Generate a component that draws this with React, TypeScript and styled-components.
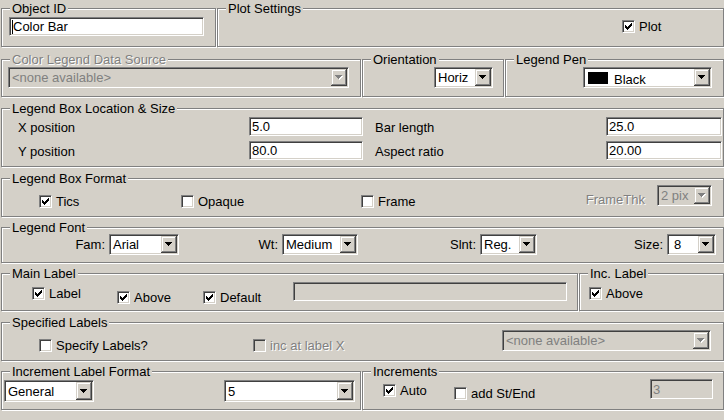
import styled, { createGlobalStyle, css } from "styled-components";

const FACE = "#d4d0c8";
const SHADOW = "#808080";
const DARK = "#404040";

const GlobalStyle = createGlobalStyle`
  html, body {
    margin: 0;
    padding: 0;
    background: ${FACE};
  }
  body {
    font-family: "Liberation Sans", Arial, sans-serif;
    font-size: 13px;
    color: #000;
  }
`;

interface Place {
  $ml?: number | string;
  $mr?: number;
  $mt?: number;
  $w?: number;
}

const place = css<Place>`
  flex: none;
  margin-left: ${(p) => (typeof p.$ml === "string" ? p.$ml : `${p.$ml ?? 0}px`)};
  margin-right: ${(p) => p.$mr ?? 0}px;
  margin-top: ${(p) => p.$mt ?? 0}px;
  ${(p) => (p.$w ? `width: ${p.$w}px;` : "")}
`;

const muted = css<{ $off?: boolean }>`
  color: ${(p) => (p.$off ? SHADOW : "#000")};
  text-shadow: ${(p) => (p.$off ? "1px 1px 0 #fff" : "none")};
`;

const sunken = css`
  box-sizing: border-box;
  border: 1px solid;
  border-color: ${SHADOW} #fff #fff ${SHADOW};
  box-shadow: inset 1px 1px 0 ${DARK}, inset -1px -1px 0 ${FACE};
`;

const Dialog = styled.div`
  width: 724px;
  height: 420px;
  box-sizing: border-box;
  padding-left: 1px;
  display: flex;
  flex-direction: column;
  background: ${FACE};
  overflow: hidden;
`;

const Row = styled.div<{ $top: number }>`
  display: flex;
  gap: 1px;
  margin-top: ${(p) => p.$top}px;
`;

const Group = styled.section<{ $w?: number; $h: number }>`
  box-sizing: border-box;
  flex: ${(p) => (p.$w ? `0 0 ${p.$w}px` : "1 1 auto")};
  height: ${(p) => p.$h}px;
  border: 1px solid ${SHADOW};
  box-shadow: inset 1px 1px 0 #fff, 1px 1px 0 #fff;
  display: flex;
  flex-direction: column;
`;

const Caption = styled.span<{ $off?: boolean }>`
  align-self: flex-start;
  height: 15px;
  line-height: 15px;
  margin: -8px 0 -7px 8px;
  padding: 0 2px;
  background: ${FACE};
  white-space: nowrap;
  ${muted}
`;

const Line = styled.div`
  display: flex;
  align-items: flex-start;
`;

const CheckItem = styled.div<Place & { $off?: boolean }>`
  display: flex;
  align-items: center;
  gap: 4px;
  height: 13px;
  line-height: 13px;
  white-space: nowrap;
  ${muted}
  ${place}
`;

const CheckBox = styled.span<{ $off?: boolean }>`
  ${sunken}
  flex: none;
  width: 13px;
  height: 13px;
  background: ${(p) => (p.$off ? FACE : "#fff")};
  svg {
    display: block;
    margin: 2px 0 0 2px;
  }
`;

const Note = styled.span<Place & { $off?: boolean }>`
  line-height: 15px;
  white-space: nowrap;
  ${muted}
  ${place}
`;

const Field = styled.div<Place & { $h?: number; $off?: boolean }>`
  ${sunken}
  ${place}
  height: ${(p) => p.$h ?? 19}px;
  padding: 0 2px;
  display: flex;
  align-items: center;
  background: ${(p) => (p.$off ? FACE : "#fff")};
  color: ${(p) => (p.$off ? SHADOW : "#000")};
  white-space: nowrap;
  overflow: hidden;
`;

const Caret = styled.span`
  flex: none;
  width: 1px;
  height: 14px;
  background: #000;
`;

const Combo = styled.div<Place & { $h?: number; $off?: boolean }>`
  ${sunken}
  ${place}
  height: ${(p) => p.$h ?? 21}px;
  padding: 1px;
  display: flex;
  background: ${(p) => (p.$off ? FACE : "#fff")};
`;

const ComboValue = styled.span<{ $off?: boolean; $pl?: number }>`
  flex: 1;
  min-width: 0;
  padding-left: ${(p) => p.$pl ?? 2}px;
  display: flex;
  align-items: center;
  gap: 6px;
  overflow: hidden;
  white-space: nowrap;
  color: ${(p) => (p.$off ? SHADOW : "#000")};
`;

const DropButton = styled.span`
  flex: none;
  width: 16px;
  display: flex;
  align-items: center;
  justify-content: center;
  background: ${FACE};
  box-shadow: inset -1px -1px 0 ${DARK}, inset 1px 1px 0 ${FACE},
    inset -2px -2px 0 ${SHADOW}, inset 2px 2px 0 #fff;
`;

const Swatch = styled.span`
  flex: none;
  width: 20px;
  height: 12px;
  margin-left: 1px;
  background: #000;
`;

const PenName = styled.span`
  padding-top: 3px;
`;

const Coords = styled.div`
  display: grid;
  grid-template-columns: 361px 1fr;
  row-gap: 5px;
  margin-top: 8px;
  padding-right: 1px;
`;

const Coord = styled.div<{ $pl: number }>`
  display: flex;
  align-items: center;
  justify-content: space-between;
  padding-left: ${(p) => p.$pl}px;
`;

const CoordLabel = styled.span`
  line-height: 15px;
  padding-top: 2px;
  white-space: nowrap;
`;

const FontGrid = styled.div`
  display: grid;
  grid-template-columns: repeat(4, 179px);
  margin-top: 6px;
`;

const FontPick = styled.label`
  display: flex;
  align-items: center;
  justify-content: flex-end;
  gap: 4px;
  padding-right: 2px;
`;

const CHECK = ["......#", ".....##", "#...###", "##.###.", "#####..", ".###...", "..#...."];
const checkPath = CHECK.map((r, y) =>
  r
    .split("")
    .map((c, x) => (c === "#" ? `M${x} ${y}h1v1h-1z` : ""))
    .join("")
).join("");
const ARROW = "M0 0h7v1h-1v1h-1v1h-1v1h-1v-1h-1v-1h-1v-1h-1z";

function Check({ label, on, off, ...rest }: Place & { label: string; on?: boolean; off?: boolean }) {
  return (
    <CheckItem $off={off} {...rest}>
      <CheckBox $off={off}>
        {on && (
          <svg width="7" height="7" viewBox="0 0 7 7" shapeRendering="crispEdges">
            <path d={checkPath} fill="#000" />
          </svg>
        )}
      </CheckBox>
      {label}
    </CheckItem>
  );
}

function Drop({ off }: { off?: boolean }) {
  return (
    <DropButton>
      <svg width="8" height="5" viewBox="0 0 8 5" shapeRendering="crispEdges">
        {off && <path d={ARROW} fill="#fff" transform="translate(1 1)" />}
        <path d={ARROW} fill={off ? SHADOW : "#000"} />
      </svg>
    </DropButton>
  );
}

function Select({
  value,
  off,
  pl,
  h,
  ...rest
}: Place & { value: string; off?: boolean; pl?: number; h?: number }) {
  return (
    <Combo $off={off} $h={h} {...rest}>
      <ComboValue $off={off} $pl={pl}>{value}</ComboValue>
      <Drop off={off} />
    </Combo>
  );
}

export default function App() {
  return (
    <>
      <GlobalStyle />
      <Dialog>
        <Row $top={8}>
          <Group $w={215} $h={39}>
            <Caption>Object ID</Caption>
            <Line>
              <Field $ml={7} $mt={8} $w={195}>
                <Caret />
                Color Bar
              </Field>
            </Line>
          </Group>
          <Group $h={39}>
            <Caption>Plot Settings</Caption>
            <Line>
              <Check label="Plot" on $ml={404} $mt={11} />
            </Line>
          </Group>
        </Row>

        <Row $top={12}>
          <Group $w={360} $h={38}>
            <Caption $off>Color Legend Data Source</Caption>
            <Line>
              <Select value="<none available>" off $ml={6} $mt={7} $w={341} />
            </Line>
          </Group>
          <Group $w={142} $h={38}>
            <Caption>Orientation</Caption>
            <Line>
              <Select value="Horiz" $ml={71} $mt={7} $w={59} />
            </Line>
          </Group>
          <Group $h={38}>
            <Caption>Legend Pen</Caption>
            <Line>
              <Combo $ml={77} $mt={7} $w={129}>
                <ComboValue>
                  <Swatch />
                  <PenName>Black</PenName>
                </ComboValue>
                <Drop />
              </Combo>
            </Line>
          </Group>
        </Row>

        <Row $top={11}>
          <Group $h={59}>
            <Caption>Legend Box Location &amp; Size</Caption>
            <Coords>
              <Coord $pl={16}>
                <CoordLabel>X position</CoordLabel>
                <Field $w={114}>5.0</Field>
              </Coord>
              <Coord $pl={12}>
                <CoordLabel>Bar length</CoordLabel>
                <Field $w={116}>25.0</Field>
              </Coord>
              <Coord $pl={16}>
                <CoordLabel>Y position</CoordLabel>
                <Field $w={114}>80.0</Field>
              </Coord>
              <Coord $pl={12}>
                <CoordLabel>Aspect ratio</CoordLabel>
                <Field $w={116}>20.00</Field>
              </Coord>
            </Coords>
          </Group>
        </Row>

        <Row $top={11}>
          <Group $h={39}>
            <Caption>Legend Box Format</Caption>
            <Line>
              <Check label="Tics" on $ml={37} $mt={16} $w={142} />
              <Check label="Opaque" $mt={16} $w={180} />
              <Check label="Frame" $mt={16} />
              <Note $off $ml="auto" $mt={13}>FrameThk</Note>
              <Select value="2 pix" off $ml={12} $mr={11} $mt={6} $w={55} />
            </Line>
          </Group>
        </Row>

        <Row $top={10}>
          <Group $h={36}>
            <Caption>Legend Font</Caption>
            <FontGrid>
              <FontPick>
                Fam:
                <Select value="Arial" $w={70} />
              </FontPick>
              <FontPick>
                Wt:
                <Select value="Medium" $w={76} />
              </FontPick>
              <FontPick>
                Slnt:
                <Select value="Reg." $w={57} />
              </FontPick>
              <FontPick>
                Size:
                <Select value="8" pl={5} $w={49} />
              </FontPick>
            </FontGrid>
          </Group>
        </Row>

        <Row $top={10}>
          <Group $w={577} $h={38}>
            <Caption>Main Label</Caption>
            <Line>
              <Check label="Label" on $ml={30} $mt={13} $w={85} />
              <Check label="Above" on $mt={17} $w={86} />
              <Check label="Default" on $mt={17} $w={90} />
              <Field $off $mt={8} $w={274} />
            </Line>
          </Group>
          <Group $h={38}>
            <Caption>Inc. Label</Caption>
            <Line>
              <Check label="Above" on $ml={9} $mt={13} />
            </Line>
          </Group>
        </Row>

        <Row $top={11}>
          <Group $h={39}>
            <Caption>Specified Labels</Caption>
            <Line>
              <Check label="Specify Labels?" $ml={37} $mt={16} $w={214} />
              <Check label="inc at label X" off $mt={16} $w={249} />
              <Select value="<none available>" off $mt={7} $w={209} />
            </Line>
          </Group>
        </Row>

        <Row $top={10}>
          <Group $w={360} $h={39}>
            <Caption>Increment Label Format</Caption>
            <Line>
              <Select value="General" h={22} $ml={2} $mt={8} $w={90} />
              <Select value="5" h={22} $ml={130} $mt={8} $w={131} />
            </Line>
          </Group>
          <Group $h={39}>
            <Caption>Increments</Caption>
            <Line>
              <Check label="Auto" on $ml={20} $mt={12} $w={71} />
              <Check label="add St/End" $mt={15} />
              <Field $off $ml="auto" $mr={10} $mt={7} $w={63} $h={20}>
                3
              </Field>
            </Line>
          </Group>
        </Row>
      </Dialog>
    </>
  );
}
